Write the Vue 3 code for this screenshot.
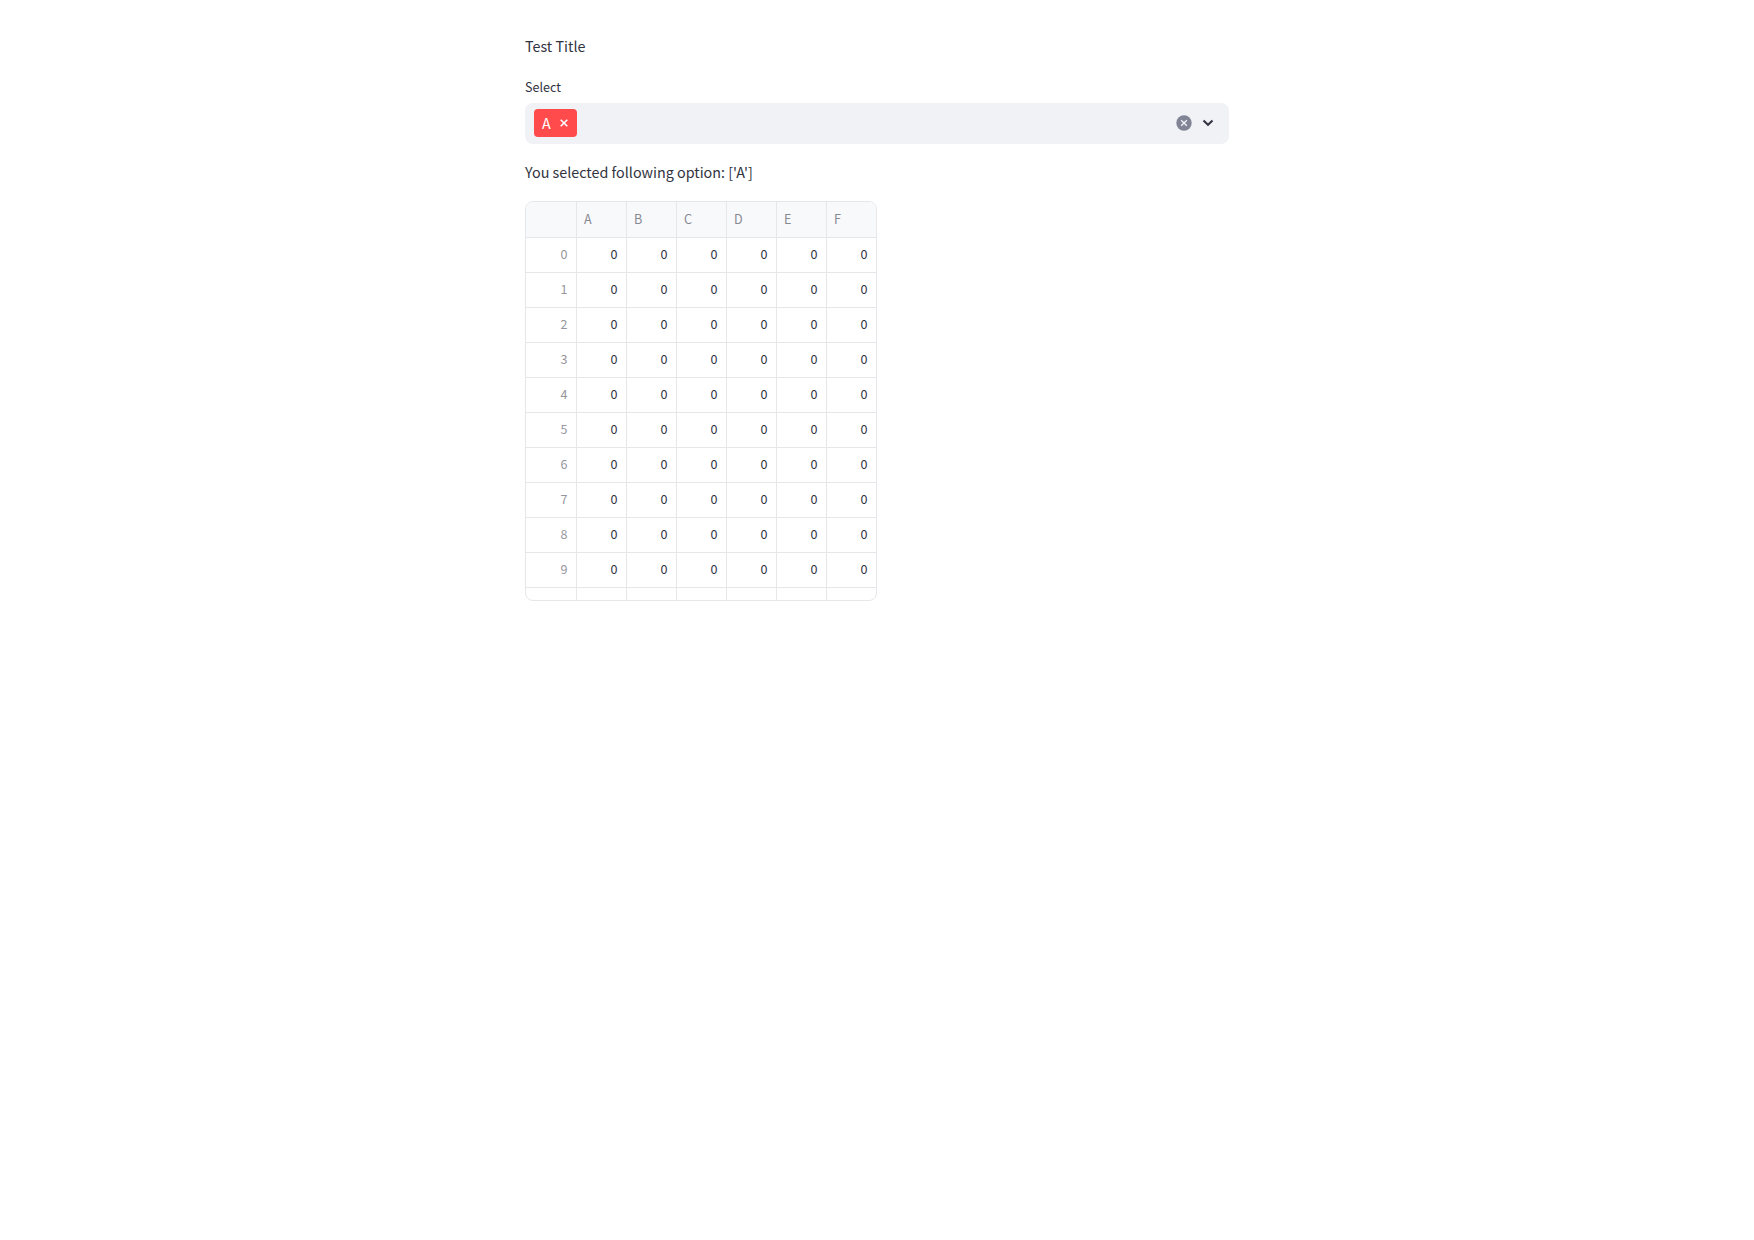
<script setup>
const columns = ['A', 'B', 'C', 'D', 'E', 'F']
const rows = Array.from({ length: 10 }, (_, index) => ({
  index,
  values: columns.map(() => 0),
}))
</script>

<template>
  <main class="page">
    <p class="text title">Test Title</p>
    <label class="label">Select</label>
    <div class="select">
      <span class="tag">
        <span class="tag-text">A</span>
        <svg class="tag-x" width="8" height="8" viewBox="0 0 8 8"><path d="M0.7 0.7 7.3 7.3M7.3 0.7 0.7 7.3" /></svg>
      </span>
      <span class="actions">
        <svg width="16" height="16" viewBox="0 0 16 16">
          <circle cx="8" cy="8" r="7.7" fill="#808495" />
          <path d="M5.2 5.2 10.8 10.8M10.8 5.2 5.2 10.8" stroke="#f0f2f6" stroke-width="1.4" />
        </svg>
        <svg class="chevron" width="12" height="8" viewBox="0 0 12 8"><path d="M1.5 1.5 6 5.8 10.5 1.5" /></svg>
      </span>
    </div>
    <p class="text result">You selected following option: ['A']</p>
    <div class="grid">
      <div class="row head">
        <div class="cell index"></div>
        <div v-for="c in columns" :key="c" class="cell">{{ c }}</div>
      </div>
      <div v-for="r in rows" :key="r.index" class="row">
        <div class="cell index">{{ r.index }}</div>
        <div v-for="(v, i) in r.values" :key="i" class="cell">{{ v }}</div>
      </div>
      <div class="row last">
        <div class="cell index"></div>
        <div v-for="c in columns" :key="c" class="cell"></div>
      </div>
    </div>
  </main>
</template>

<style>
body {
  background: #fff;
}
</style>

<style scoped>
.page {
  box-sizing: border-box;
  width: 704px;
  margin: 0 auto;
  padding-top: 33px;
  color: #31333f;
  font-family: "Source Sans Pro", "Noto Sans CJK SC", sans-serif;
}
.text {
  margin: 0;
  height: 26px;
  font-size: 14.33px;
  line-height: 26px;
}
.label {
  display: block;
  height: 20px;
  margin: 18px 0 6px;
  font-size: 12.55px;
  line-height: 20px;
}
.select {
  display: flex;
  align-items: center;
  justify-content: space-between;
  box-sizing: border-box;
  height: 41px;
  padding: 0 15px 0 9px;
  border-radius: 8px;
  background: #f0f2f6;
}
.tag {
  display: flex;
  align-items: center;
  box-sizing: border-box;
  width: 43px;
  height: 28px;
  margin-bottom: 1px;
  padding: 0 9px 0 8px;
  justify-content: space-between;
  border-radius: 4px;
  background: #ff4b4b;
  color: #fff;
  font-size: 14.33px;
  line-height: 28px;
}
.tag-x {
  fill: none;
  stroke: #fff;
  stroke-width: 1.6;
}
.actions {
  display: flex;
  align-items: center;
  gap: 10px;
  margin-bottom: 1px;
}
.chevron {
  fill: none;
  stroke: #31333f;
  stroke-width: 2;
}
.result {
  margin: 15px 0 16px;
}
.grid {
  box-sizing: border-box;
  width: 352px;
  height: 400px;
  overflow: hidden;
  border: 1px solid #e6e7ea;
  border-radius: 8px;
  font-size: 12.55px;
}
.row {
  display: flex;
  height: 35px;
  line-height: 32px;
}
.cell {
  box-sizing: border-box;
  width: 50px;
  flex: none;
  padding: 0 8.5px;
  border-right: 1px solid #e6e7e9;
  border-bottom: 1px solid #e6e7e9;
  text-align: right;
}
.cell:last-child {
  width: 49px;
  border-right: 0;
}
.index {
  width: 51px;
  color: #95969e;
}
.head {
  height: 36px;
  line-height: 34px;
}
.head .cell {
  padding: 0 7px;
  background: #f8f9fb;
  color: #878992;
  text-align: left;
}
.last {
  height: 13px;
}
.last .cell {
  border-bottom: 0;
}
</style>
